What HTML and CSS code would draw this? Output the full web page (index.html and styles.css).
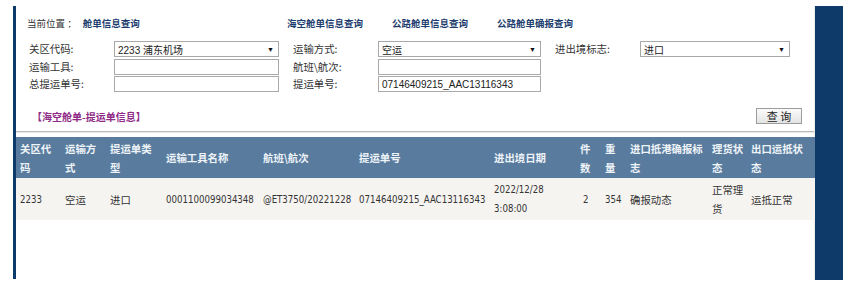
FILE: index.html
```html
<!DOCTYPE html>
<html lang="zh-CN">
<head>
<meta charset="utf-8">
<title>舱单信息查询</title>
<link rel="stylesheet" href="styles.css">
</head>
<body>
<div class="page">
  <div class="leftbar"></div>
  <div class="main">
    <div class="nav">
      <div class="crumb">当前位置 ：<span class="crumb-cur">舱单信息查询</span></div>
      <a class="navlink w1">海空舱单信息查询</a>
      <a class="navlink w2">公路舱单信息查询</a>
      <a class="navlink">公路舱单确报查询</a>
    </div>

    <div class="form">
      <div class="lbl">关区代码:</div>
      <div class="field sel"><span>2233 浦东机场</span><span class="arrow">▼</span></div>
      <div class="lbl pad">运输方式:</div>
      <div class="field sel"><span>空运</span><span class="arrow">▼</span></div>
      <div class="lbl pad">进出境标志:</div>
      <div class="field sel"><span>进口</span><span class="arrow">▼</span></div>

      <div class="lbl">运输工具:</div>
      <div class="field"></div>
      <div class="lbl pad">航班\航次:</div>
      <div class="field"></div>
      <div></div>
      <div></div>

      <div class="lbl">总提运单号:</div>
      <div class="field"></div>
      <div class="lbl pad">提运单号:</div>
      <div class="field"><span>07146409215_AAC13116343</span></div>
      <div></div>
      <div></div>
    </div>

    <div class="titlebar">
      <span class="title">【海空舱单-提运单信息】</span>
      <button class="btn">查 询</button>
    </div>
    <div class="sep"></div>

    <table class="grid">
      <colgroup>
        <col style="width:45px"><col style="width:45px"><col style="width:56px"><col style="width:97px">
        <col style="width:96px"><col style="width:135px"><col style="width:86px"><col style="width:25px">
        <col style="width:25px"><col style="width:82px"><col style="width:39px"><col style="width:68px">
      </colgroup>
      <thead>
        <tr>
          <th>关区代码</th><th>运输方式</th><th>提运单类型</th><th>运输工具名称</th>
          <th>航班\航次</th><th>提运单号</th><th>进出境日期</th><th>件数</th>
          <th>重量</th><th>进口抵港确报标志</th><th>理货状态</th><th class="last">出口运抵状态</th>
        </tr>
      </thead>
      <tbody>
        <tr>
          <td class="num">2233</td><td>空运</td><td>进口</td><td class="num">0001100099034348</td>
          <td class="num">@ET3750/20221228</td><td class="num">07146409215_AAC13116343</td>
          <td class="num wrap">2022/12/28 3:08:00</td><td class="num ctr">2</td>
          <td class="num">354</td><td>确报动态</td><td>正常理货</td><td class="last">运抵正常</td>
        </tr>
      </tbody>
    </table>
  </div>
  <div class="rightpanel"></div>
</div>
</body>
</html>
```
FILE: styles.css
```css
html, body {
  margin: 0;
  padding: 0;
  background: #ffffff;
}
body {
  font-family: "Noto Sans CJK SC", "Liberation Sans", sans-serif;
  color: #333333;
}
.page {
  display: flex;
  align-items: flex-start;
  padding: 6px 0 0 13px;
}
.leftbar {
  width: 3px;
  height: 273px;
  background: #0d3a68;
  flex: none;
}
.rightpanel {
  width: 28px;
  height: 274px;
  background: #0d3a68;
  flex: none;
}
.main {
  width: 799px;
  flex: none;
  box-sizing: border-box;
  padding-top: 10px;
  border-right: 1px solid #ececec;
  height: 274px;
}

/* navigation */
.nav {
  display: flex;
  align-items: center;
  height: 14px;
  padding-left: 11px;
  font-size: 9.5px;
  line-height: 14px;
}
.crumb {
  width: 260px;
  color: #333;
}
.crumb-cur {
  margin-left: 6px;
  font-weight: bold;
  color: #1c3d6e;
}
.navlink {
  font-weight: bold;
  color: #1c3d6e;
  text-decoration: none;
}
.navlink.w1 { width: 105px; }
.navlink.w2 { width: 105px; }

/* form */
.form {
  display: grid;
  grid-template-columns: 85px 165px 99px 163px 99px 150px;
  grid-auto-rows: 16px;
  row-gap: 1.5px;
  margin-top: 11px;
  padding-left: 13px;
}
.lbl {
  font-size: 10.4px;
  line-height: 16px;
  color: #333;
}
.lbl.pad {
  padding-left: 14px;
}
.field {
  box-sizing: border-box;
  height: 16px;
  border: 1px solid #a9a9a9;
  background: #fff;
  display: flex;
  align-items: center;
  justify-content: space-between;
  padding: 0 4px 0 3px;
  font-family: "Liberation Sans", "Noto Sans CJK SC", sans-serif;
  font-size: 10px;
  color: #222;
}
.arrow {
  font-size: 7px;
  color: #111;
}

/* title bar */
.titlebar {
  display: flex;
  align-items: center;
  justify-content: space-between;
  height: 16px;
  margin-top: 16px;
  padding: 0 12px 0 16px;
}
.title {
  font-size: 10px;
  font-weight: bold;
  color: #8e2a86;
}
.btn {
  box-sizing: border-box;
  width: 46px;
  height: 16px;
  padding: 0;
  border: 1px solid #9c9c9c;
  background: linear-gradient(#fbfbfb, #e4e4e4);
  font-family: "Noto Sans CJK SC", sans-serif;
  font-size: 11px;
  line-height: 14px;
  color: #222;
}
.sep {
  margin-top: 7px;
  border-top: 1px solid #bcbcbc;
  border-bottom: 1px solid #e8e8e8;
}

/* table */
.grid {
  margin-top: 4px;
  width: 799px;
  border-collapse: collapse;
  table-layout: fixed;
}
.grid th {
  background: #587b9e;
  color: #eef3f8;
  font-size: 10.4px;
  font-weight: bold;
  line-height: 19px;
  text-align: left;
  padding: 1.5px 2px 1.5px 4px;
  vertical-align: middle;
}
.grid td {
  background: #f6f4f1;
  color: #333;
  font-size: 10.4px;
  line-height: 19px;
  text-align: left;
  padding: 2px 2px 2px 4px;
  vertical-align: middle;
  white-space: nowrap;
}
.grid td.wrap,
.grid td:nth-child(11) {
  white-space: normal;
}
.grid td.num {
  font-family: "DejaVu Sans Condensed", "Liberation Sans Narrow", "Liberation Sans", sans-serif;
  font-stretch: condensed;
  font-size: 9.6px;
}
.grid td.ctr {
  padding-left: 7px;
}
.grid .last {
  padding-right: 10px;
}
```
